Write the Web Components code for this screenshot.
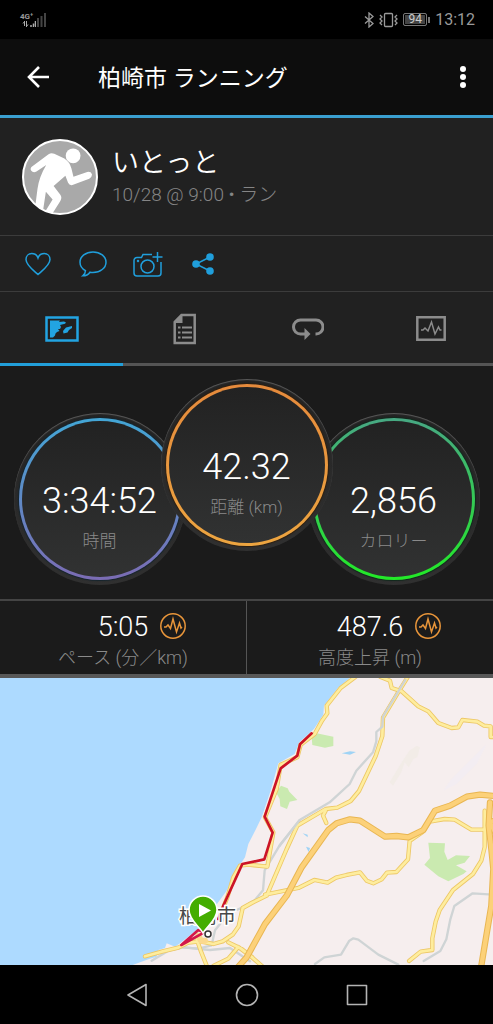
<!DOCTYPE html>
<html lang="ja">
<head>
<meta charset="utf-8">
<meta name="viewport" content="width=device-width, initial-scale=1">
<title>柏崎市 ランニング</title>
<style>
  html, body {
    margin: 0;
    background: #000;
  }
  body {
    font-family: Roboto, "Noto Sans CJK JP", sans-serif;
    font-weight: 300;
    color: #fff;
  }
</style>
</head>
<body>
<activity-page>
  <status-bar slot="top" time="13:12" battery="94"></status-bar>
  <app-bar slot="top">柏崎市 ランニング</app-bar>
  <profile-header name="いとっと">10/28 @ 9:00 • ラン</profile-header>
  <action-bar></action-bar>
  <tab-bar selected="0"></tab-bar>
  <gauge-row>
    <round-gauge value="3:34:52" from="#43a6d6" to="#7b6cb4" shade="#15252e">時間</round-gauge>
    <round-gauge class="main" value="42.32" from="#e58a3c" to="#eda540" shade="#2e1f10">距離 (km)</round-gauge>
    <round-gauge value="2,856" from="#47a883" to="#22ea27" shade="#10291c">カロリー</round-gauge>
  </gauge-row>
  <stat-row>
    <stat-cell value="5:05">ペース (分／km)</stat-cell>
    <stat-cell value="487.6">高度上昇 (m)</stat-cell>
  </stat-row>
  <route-map place="柏崎市"></route-map>
  <nav-bar slot="bottom"></nav-bar>
</activity-page>

<script>
const reset = `
  * { box-sizing: border-box; }
  button {
    margin: 0;
    padding: 0;
    border: 0;
    background: none;
    color: inherit;
    font: inherit;
    display: flex;
    align-items: center;
    justify-content: center;
  }
  svg { display: block; flex: none; }
`;

class ActivityPage extends HTMLElement {
  constructor() {
    super();
    this.attachShadow({ mode: "open" }).innerHTML = `
<style>
  :host {
    display: flex;
    flex-direction: column;
    min-height: 100vh;
    background: #000;
  }
  main {
    flex: 1;
    display: flex;
    flex-direction: column;
    background: #1b1b1b;
  }
</style>
<slot name="top"></slot>
<main><slot></slot></main>
<slot name="bottom"></slot>`;
  }
}

class StatusBar extends HTMLElement {
  constructor() {
    super();
    this.attachShadow({ mode: "open" });
  }

  connectedCallback() {
    this.shadowRoot.innerHTML = `
<style>
  ${reset}
  :host {
    box-sizing: border-box;
    display: flex;
    align-items: center;
    justify-content: space-between;
    height: 39px;
    padding: 0 18px 0 20px;
    background: #000;
    color: #9a9a9a;
    font-weight: 400;
  }
  .signal, .right { display: flex; align-items: center; }
  .network { display: flex; flex-direction: column; align-items: flex-start; }
  .network span { font-size: 8px; line-height: 8px; font-weight: 700; }
  .right { gap: 5px; }
  .battery {
    display: flex;
    align-items: center;
    gap: 1px;
  }
  .battery span {
    width: 24px;
    border: 1px solid #777;
    border-radius: 2px;
    background: #444;
    box-shadow: inset 0 0 0 1px #000;
    font-size: 12px;
    line-height: 11px;
    text-align: center;
    color: #ccc;
  }
  .battery i { width: 2px; height: 6px; background: #777; }
  time { font-size: 16px; line-height: 20px; }
</style>
<div class="signal">
  <div class="network">
    <span>4G⁺</span>
    <svg width="16" height="6" viewBox="0 0 16 6" stroke="#aaa" fill="none">
      <path d="M4.5 0v5M3 2.500l1.500-2M6.500 0v6M8 3.500l-1.500 2"/>
      <path d="M11 4v2M13.500 2.500v3.500M15.500 0v6" stroke-width="1.500"/>
    </svg>
  </div>
  <svg width="10" height="14" viewBox="0 0 10 14" stroke="#444" stroke-width="2"><path d="M2 14V5M5.500 14V3M9 14V0"/></svg>
</div>
<div class="right">
  <svg width="10" height="16" viewBox="0 0 10 16" fill="none" stroke="#9a9a9a" stroke-width="1.300"><path d="M1 4.500l8 7-4 3.500V1l4 3.500-8 7"/></svg>
  <svg width="19" height="16" viewBox="0 0 19 16" fill="none" stroke="#9a9a9a" stroke-width="1.300">
    <rect x="5.500" y="1.500" width="8" height="13" rx="1"/>
    <path d="M1 3l2 2-2 2 2 2-2 2 2 2M18 3l-2 2 2 2-2 2 2 2-2 2"/>
  </svg>
  <div class="battery"><span>${this.getAttribute("battery")}</span><i></i></div>
  <time>${this.getAttribute("time")}</time>
</div>`;
  }
}

class AppBar extends HTMLElement {
  constructor() {
    super();
    this.attachShadow({ mode: "open" }).innerHTML = `
<style>
  ${reset}
  :host {
    box-sizing: border-box;
    display: flex;
    align-items: center;
    height: 79px;
    padding: 0 10px 0 18px;
    background: #0d0d0d;
    border-bottom: 3px solid #3a9fd0;
  }
  button { width: 40px; height: 48px; }
  h1 {
    flex: 1;
    margin: 0 0 0 40px;
    padding-top: 4px;
    font-size: 23px;
    line-height: 32px;
    font-weight: 400;
  }
</style>
<button aria-label="戻る">
  <svg width="24" height="24" viewBox="0 0 24 24" fill="none" stroke="#fff" stroke-width="2.600"><path d="M23 12H3M13 2L3 12l10 10"/></svg>
</button>
<h1><slot></slot></h1>
<button aria-label="メニュー">
  <svg width="8" height="24" viewBox="0 0 8 24" fill="#fff"><circle cx="4" cy="4" r="3"/><circle cx="4" cy="12" r="3"/><circle cx="4" cy="20" r="3"/></svg>
</button>`;
  }
}

class ProfileHeader extends HTMLElement {
  constructor() {
    super();
    this.attachShadow({ mode: "open" });
  }

  connectedCallback() {
    this.shadowRoot.innerHTML = `
<style>
  ${reset}
  :host {
    box-sizing: border-box;
    display: flex;
    align-items: center;
    gap: 14px;
    height: 118px;
    padding: 0 22px;
    background: #212121;
    border-bottom: 1px solid #3c3c3c;
  }
  .text { padding-top: 4px; }
  h2 {
    margin: 0;
    font-size: 27px;
    line-height: 32px;
    font-weight: 350;
  }
  p {
    margin: 0;
    font-size: 19px;
    line-height: 32px;
    color: #858585;
  }
</style>
<svg width="76" height="76" viewBox="66 56 226 226">
  <clipPath id="disc"><circle cx="179" cy="169" r="110"/></clipPath>
  <circle cx="179" cy="169" r="110" fill="#a9a9a9"/>
  <g clip-path="url(#disc)" fill="#fff">
    <circle cx="218" cy="106" r="22"/>
    <path d="M94 139L145 101Q153 96 162 100L192 114Q208 124 213 144L219 168 260 154Q271 152 274 161 275 169 266 174L216 193Q207 195 203 186L195 165 160 196 180 222Q186 231 180 240L155 280 136 270 157 236 137 213 126 286 102 282 112 205Q116 170 138 133L109 153Q99 158 93 150 90 144 94 139z"/>
  </g>
  <circle cx="179" cy="169" r="110" fill="none" stroke="#fff" stroke-width="6"/>
</svg>
<div class="text">
  <h2>${this.getAttribute("name")}</h2>
  <p><slot></slot></p>
</div>`;
  }
}

class ActionBar extends HTMLElement {
  constructor() {
    super();
    this.attachShadow({ mode: "open" }).innerHTML = `
<style>
  ${reset}
  :host {
    box-sizing: border-box;
    display: flex;
    height: 56px;
    padding: 0 10px;
    background: #212121;
    border-bottom: 1px solid #3c3c3c;
    color: #209fdc;
  }
  button { width: 55px; }
  svg { fill: none; stroke: currentColor; stroke-width: 1.500; }
</style>
<button aria-label="いいね">
  <svg width="26" height="24" viewBox="0 0 26 24"><path d="M13 22.500C8 18 1 13 1 7.500 1 4 3.500 1.500 6.800 1.500 9.500 1.500 12 3 13 6c1-3 3.500-4.500 6.200-4.500C22.500 1.500 25 4 25 7.500 25 13 18 18 13 22.500z"/></svg>
</button>
<button aria-label="コメント">
  <svg width="28" height="26" viewBox="0 0 28 26"><path d="M14 1C6.800 1 1 5.500 1 11.200c0 3.500 2.200 6.600 5.500 8.400 0 2-1 3.800-2.700 5.200 3 0 5.500-1.200 7.200-3.600 1 .2 2 .3 3 .3 7.200 0 13-4.600 13-10.300S21.200 1 14 1z"/></svg>
</button>
<button aria-label="写真を追加">
  <svg width="30" height="26" viewBox="0 0 30 26"><path d="M19 3.500H10L8.500 6.500H4a3 3 0 0 0-3 3V22a3 3 0 0 0 3 3h21a3 3 0 0 0 3-3V11M24.500 1v10M19.500 6h10"/><circle cx="14.500" cy="15.500" r="6.500"/><circle cx="5" cy="10" r=".5"/></svg>
</button>
<button aria-label="共有">
  <svg width="22" height="22" viewBox="0 0 22 22"><path d="M18 4L4 11l14 7"/><g fill="currentColor" stroke="none"><circle cx="18" cy="4" r="3.800"/><circle cx="4" cy="11" r="3.800"/><circle cx="18" cy="18" r="3.800"/></g></svg>
</button>`;
  }
}

class TabBar extends HTMLElement {
  constructor() {
    super();
    this.attachShadow({ mode: "open" });
  }

  connectedCallback() {
    const selected = Number(this.getAttribute("selected"));
    const tabs = [
      ["地図", `<svg width="34" height="26" viewBox="0 0 34 26"><path d="M1.500 1.500h31v23h-31z" fill="none" stroke="currentColor" stroke-width="2.500"/><path d="M5 4.500h10l-1 1.500 5-.5 2 1-1 1.200-5 1.300 1 2-1 2h-2l1.500 2-2.500 1-1.500 1.500-.500 2-2 2H5zM18 15l3-3.500 6-1.500v2l-3 2-1.500 2.500-4 1z" fill="currentColor"/></svg>`],
      ["詳細", `<svg width="24" height="32" viewBox="0 0 24 32"><path d="M8.500 2H21.700v28H1.700V9z" fill="none" stroke="currentColor" stroke-width="2.500"/><path d="M9.500 1v9H1z" fill="currentColor"/><path d="M5 14.500h2.500M9 14.500h10M5 19.500h2.500M9 19.500h10M5 24.500h2.500M9 24.500h10" stroke="currentColor" stroke-width="2.200"/></svg>`],
      ["ラップ", `<svg width="32" height="22" viewBox="0 0 32 22"><path d="M23.500 16h.5a7 7 0 0 0 0-14H8.500a7 7 0 0 0 0 14H13" fill="none" stroke="currentColor" stroke-width="3"/><path d="M12.500 10v12l6-6z" fill="currentColor"/></svg>`],
      ["グラフ", `<svg width="30" height="25" viewBox="0 0 30 25"><path d="M1.300 1.300h27.400v22.400H1.300z" fill="none" stroke="currentColor" stroke-width="2.500"/><path d="M5 14h2l2-2 3 3 3.500-9 3.500 12 3.500-7 1.500 3h1.500" fill="none" stroke="currentColor" stroke-width="1.500"/></svg>`],
    ];
    this.shadowRoot.innerHTML = `
<style>
  ${reset}
  :host {
    display: flex;
    background: #212121;
    color: #8c8c8c;
  }
  button {
    flex: 1;
    height: 74px;
    padding-top: 2px;
    border-bottom: 3px solid #555;
  }
  button[aria-selected="true"] {
    color: #22a4e2;
    border-bottom-color: #229fda;
  }
</style>
${tabs.map(([label, icon], i) => `<button role="tab" aria-label="${label}" aria-selected="${i === selected}">${icon}</button>`).join("")}`;
  }
}

class GaugeRow extends HTMLElement {
  constructor() {
    super();
    this.attachShadow({ mode: "open" }).innerHTML = `
<style>
  :host {
    display: flex;
    justify-content: center;
    align-items: flex-end;
    padding: 13px 0 14px;
  }
  ::slotted(.main) {
    z-index: 1;
    margin: 0 -25px 34px;
  }
</style>
<slot></slot>`;
  }
}

class RoundGauge extends HTMLElement {
  constructor() {
    super();
    this.attachShadow({ mode: "open" });
  }

  connectedCallback() {
    const from = this.getAttribute("from");
    const to = this.getAttribute("to");
    this.shadowRoot.innerHTML = `
<style>
  :host {
    box-sizing: border-box;
    flex: none;
    width: 172px;
    height: 172px;
    padding: 5px;
    border-radius: 50%;
    background: linear-gradient(#232323, #303030);
    box-shadow: inset 0 1px 1px #5c5c5c;
  }
  .ring {
    box-sizing: border-box;
    height: 162px;
    padding-top: 59px;
    border: 3px solid transparent;
    border-radius: 50%;
    background: linear-gradient(#222, #313232) padding-box, linear-gradient(${from}, ${to}) border-box;
    box-shadow: 0 0 1px 1px ${this.getAttribute("shade")};
    text-align: center;
  }
  .value { font-size: 36px; line-height: 42px; }
  .label { margin-top: 8px; font-size: 17px; line-height: 22px; color: #8a8a8a; }
</style>
<div class="ring">
  <div class="value">${this.getAttribute("value")}</div>
  <div class="label"><slot></slot></div>
</div>`;
  }
}

class StatRow extends HTMLElement {
  constructor() {
    super();
    this.attachShadow({ mode: "open" }).innerHTML = `
<style>
  :host {
    display: flex;
    border-top: 2px solid #444;
    border-bottom: 4px solid #585858;
  }
  ::slotted(*) { flex: 1; }
  ::slotted(:not(:first-child)) { border-left: 1px solid #555; }
</style>
<slot></slot>`;
  }
}

class StatCell extends HTMLElement {
  constructor() {
    super();
    this.attachShadow({ mode: "open" });
  }

  connectedCallback() {
    this.shadowRoot.innerHTML = `
<style>
  ${reset}
  :host {
    display: block;
    padding: 9px 0 4px;
    text-align: center;
  }
  /* the number stays centred, the chart button hangs on its right */
  .line {
    display: grid;
    grid-template-columns: 1fr auto 1fr;
    align-items: center;
    column-gap: 12px;
  }
  .value { grid-column: 2; padding-top: 2px; font-size: 27px; line-height: 30px; }
  button { justify-self: start; }
  .label { margin-top: 4px; font-size: 18px; line-height: 24px; color: #8a8a8a; }
</style>
<div class="line">
  <span class="value">${this.getAttribute("value")}</span>
  <button aria-label="グラフ">
    <svg width="26" height="26" viewBox="0 0 26 26" fill="none" stroke="#e8953a" stroke-width="1.500"><circle cx="13" cy="13" r="12.200"/><path d="M4 14h2l2-2 2.500 3.500L13 6l3.500 13 3-9 1.500 5 1-1"/></svg>
  </button>
</div>
<div class="label"><slot></slot></div>`;
  }
}

class RouteMap extends HTMLElement {
  constructor() {
    super();
    this.attachShadow({ mode: "open" });
  }

  connectedCallback() {
    // drawn at three units per pixel
    const minor = [
      "M1067 8L1022 42 980 95 982 118 966 140 944 180 902 212 892 250 842 272 830 345 795 430 820 475 802 578 745 572 720 575 700 610 682 670 660 725",
      "M1140 8l30 12 5 22 30 10 50 45 30 15 30 35 40 15 20-2 12-22 45 5 20 12 20 2v32h40",
      "M1224 8l-30 48-45 75-2 55-20 60-50 105-25 30-40 20-35 4-85 50-32 70-60 140-45 22-27 15-12 55-18 25-30 20-28 8-40-8-35 4-30 15-50 12-50 14",
      "M977 410l-8 15 10 22",
      "M795 662l100-20 48-24 40 8 25-15 32-8 40-8 20 25 20 8 25-12 16-20 28-2 35-38 5-55 40-28 20-30 45-8 30 2 50 30h40",
      "M1454 410v110l-10 40-25 40-60 48-40 60-12 35-10 50v35l-35 5-35 28",
      "M590 795l12 35 20 50M640 876l45-22 30-35 40 30 40 35M685 805l40 20 32 25",
    ];
    const major = [
      "M700 895L740 850 795 750 860 665 905 580 985 468 1010 448 1050 436 1080 440 1155 488 1190 486 1225 490 1270 468 1305 410 1350 395 1400 368 1440 362 1485 366",
      "M1470 385l-4 70 8 70 6 60-6 110-30 180",
      "M1485 440l-15 4 15 30",
    ];
    const draw = (paths, color, width) =>
      paths.map((d) => `<path d="${d}" stroke="${color}" stroke-width="${width}"/>`).join("");

    this.shadowRoot.innerHTML = `
<style>
  :host {
    flex: 1;
    display: flex;
    min-height: 287px;
    background: #f6eeee;
  }
  svg { flex: 1; width: 100%; min-width: 0; }
  text { font-size: 19px; font-weight: 400; fill: #484848; stroke: #fff; stroke-width: 3; paint-order: stroke; }
</style>
<svg viewBox="0 0 493 287" preserveAspectRatio="xMidYMid slice" role="img" aria-label="ルートの地図">
  <g transform="scale(.33333) translate(0 -12)" fill="none" stroke-linejoin="round" stroke-linecap="round">
    <path d="M0 0H1064L1014 42 972 95 970 122 942 165 898 205 884 240 835 268 812 350 785 430 768 465 745 510 735 550 705 595 680 650 640 705 620 745 590 768 540 808 525 818 500 808 495 822 475 828 470 848 445 856 400 872 390 885H0z" fill="#addaff"/>
    <path d="M935 190l15-12 50 10v28l-25 5-38-8zM828 355l15-20 20 8 5 10 24 25-23 5-8 22-20-8-2-22zM1285 506l50 2-2 25 10 25 25-14 42 2-16 20-26 8 32 18-10 8-45 22-30-15-42-35 17-20z" fill="#caeab0"/>
    <path d="M1025 238l25-6 18 2-18 8zM908 478l15 4v8zM918 518l12 4-4 12z" fill="#9fd3f5"/>
    <path d="M1208 260l20-30 22-15 10 5-8 30-12 5-14 25-12-15-10 30-25 40-10-10z" fill="#f2ece7"/>
    <path d="M1330 350l20-30 70-70 40-40-30 60-60 60z" fill="#f3edf2"/>
    <g stroke="#cfd4d5" stroke-width="7">
      <path d="M455 860l50-30 45-10 45 4 40-10 10-45 40-50 45-20 34-20 25-30 5-60 45-75 60-75"/>
      <path d="M550 820l80 8 60-6 60 40M945 870l28-20 50-8 25-42 12-7 15 4 60 45 60 30M1483 662l-65-4-55 38-12 40-12 60-18 35-50 30"/>
    </g>
    ${draw(minor, "#edc765", 13)}
    ${draw(minor, "#feed9e", 8)}
    ${draw(major, "#e9b652", 19)}
    ${draw(major, "#fcd179", 13)}
    <path d="M1216 18l-67 110-2 30-18 16v28l-10 33-50 55-20 40-60 55-90 53-60 77" stroke="#cfd4d5" stroke-width="7"/>
    <path d="M595 785l8 15h12" stroke="#fbd98e" stroke-width="18"/>
  </g>
  <g transform="scale(.33333) translate(0 -12)" fill="none" stroke="#cc1426" stroke-width="8" stroke-linejoin="round" stroke-linecap="round">
    <path d="M935 178l-35 33-8 34-50 38-48 145 24 48-25 80-66 14-57 125-15 40"/>
    <path d="M610 774l-15-6-51 45 62-34" stroke="#d3174b"/>
  </g>
  <text x="179" y="245">${this.getAttribute("place")}</text>
  <circle cx="208" cy="256" r="3" fill="#fff" stroke="#333" stroke-width="1.500"/>
  <path d="M203 255c-3-6-14-13-14-23a14 14 0 0 1 28 0c0 10-11 17-14 23z" fill="#44ad00" stroke="#fff" stroke-width="1.500"/>
  <path d="M199 226v13l12-6.500z" fill="#fff"/>
</svg>`;
  }
}

class NavBar extends HTMLElement {
  constructor() {
    super();
    this.attachShadow({ mode: "open" }).innerHTML = `
<style>
  ${reset}
  :host {
    display: flex;
    justify-content: center;
    gap: 62px;
    height: 59px;
    background: #000;
    color: #b4b4b4;
  }
  button { width: 48px; }
  svg { fill: none; stroke: currentColor; stroke-width: 1.600; stroke-linejoin: round; }
</style>
<button aria-label="戻る"><svg width="20" height="24" viewBox="0 0 20 24"><path d="M19 1.500v21L1 12z"/></svg></button>
<button aria-label="ホーム"><svg width="24" height="24" viewBox="0 0 24 24"><circle cx="12" cy="12" r="10.500"/></svg></button>
<button aria-label="履歴"><svg width="22" height="22" viewBox="0 0 22 22"><path d="M1.500 1.500h19v19h-19z"/></svg></button>`;
  }
}

customElements.define("activity-page", ActivityPage);
customElements.define("status-bar", StatusBar);
customElements.define("app-bar", AppBar);
customElements.define("profile-header", ProfileHeader);
customElements.define("action-bar", ActionBar);
customElements.define("tab-bar", TabBar);
customElements.define("gauge-row", GaugeRow);
customElements.define("round-gauge", RoundGauge);
customElements.define("stat-row", StatRow);
customElements.define("stat-cell", StatCell);
customElements.define("route-map", RouteMap);
customElements.define("nav-bar", NavBar);
</script>
</body>
</html>
